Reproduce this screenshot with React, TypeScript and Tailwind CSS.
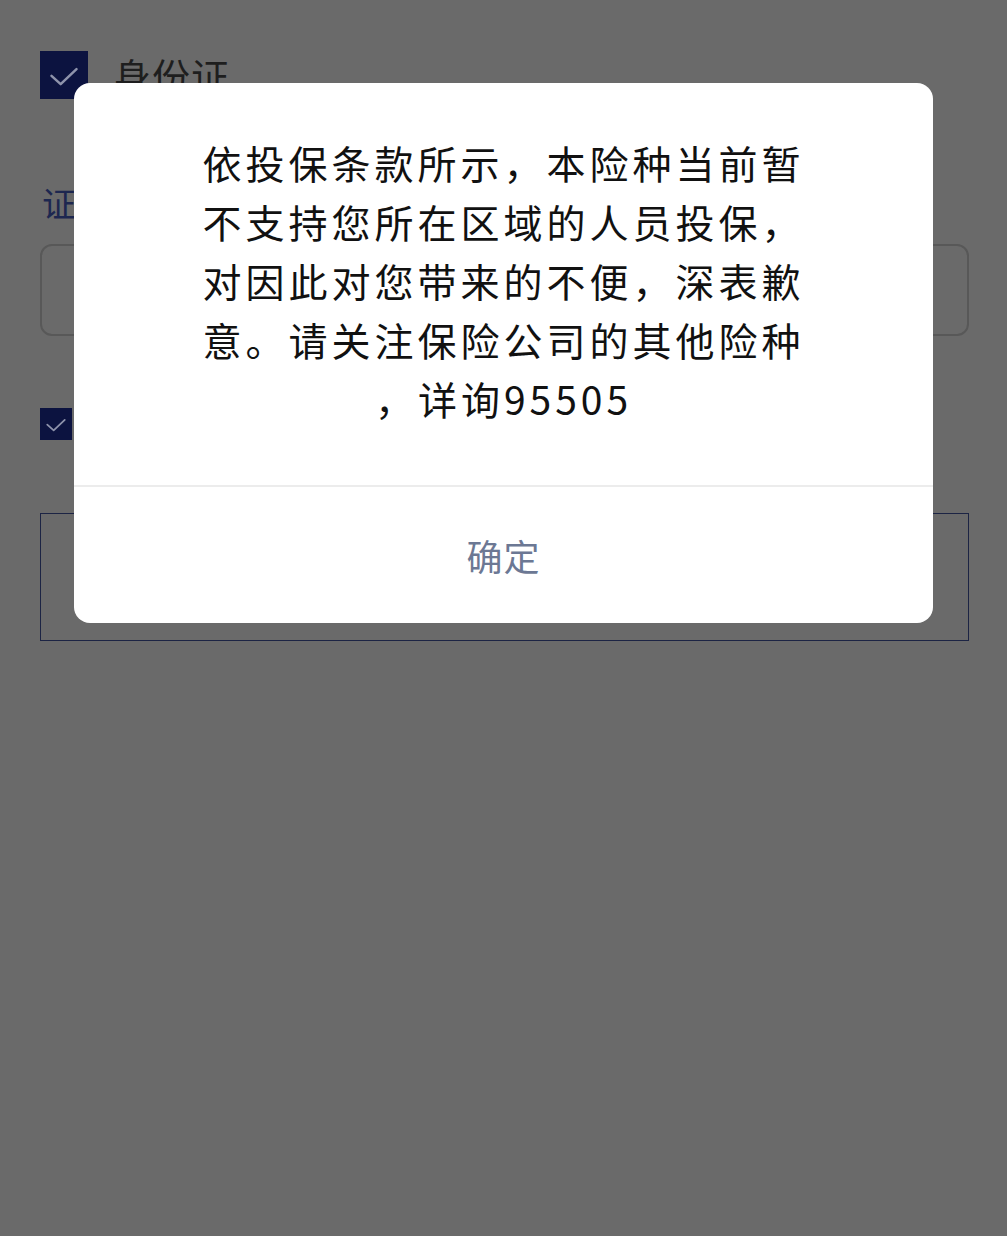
import React from "react";

const CJK = { fontFamily: '"Noto Sans CJK SC", "Noto Sans", sans-serif' };

function Check({ size, stroke }: { size: number; stroke: number }) {
  return (
    <svg width={size} height={size} viewBox="0 0 48 48" fill="none">
      <path
        d="M9 25 L20 35 L39 17"
        stroke="#8e93ab"
        strokeWidth={stroke}
        strokeLinecap="round"
        strokeLinejoin="round"
      />
    </svg>
  );
}

export default function App() {
  const lines = [
    "依投保条款所示，本险种当前暂",
    "不支持您所在区域的人员投保，",
    "对因此对您带来的不便，深表歉",
    "意。请关注保险公司的其他险种",
    "，详询95505",
  ];
  return (
    <div className="relative w-[1007px] h-[1236px] bg-[#6a6a6a] overflow-hidden" style={CJK}>
      {/* underlying page */}
      <div className="flex flex-col px-[40px] pt-[51px]">
        <div className="flex items-center gap-[25px] h-[48px]">
          <div className="w-[48px] h-[48px] bg-[#0c1340] flex items-center justify-center">
            <Check size={40} stroke={3} />
          </div>
          <span className="text-[38px] leading-[48px] text-[#1e1e1e] tracking-[1px]">身份证</span>
        </div>
        <div className="mt-[84px] text-[34px] leading-[40px] text-[#1d2750] pl-[2px]">证件号码</div>
        <div className="mt-[21px] h-[92px] w-[929px] rounded-[12px] border-2 border-[#585858]"></div>
        <div className="mt-[72px] flex items-center gap-[14px] h-[32px]">
          <div className="w-[32px] h-[32px] bg-[#0c1340] flex items-center justify-center">
            <Check size={28} stroke={3} />
          </div>
          <span className="text-[28px] text-[#1e1e1e]">本人已阅读并同意</span>
        </div>
        <div className="mt-[73px] h-[128px] w-[929px] border-[1.5px] border-[#1c2444]"></div>
      </div>

      {/* dialog */}
      <div className="absolute left-[74px] top-[83px] w-[859px] bg-white rounded-[16px] overflow-hidden flex flex-col">
        <div className="pt-[50px] pb-[57px] flex flex-col items-center text-[39px] leading-[59px] tracking-[4px] text-[#111111]">
          {lines.map((l, i) => (
            <div key={i} className="whitespace-nowrap">{l}</div>
          ))}
        </div>
        <div className="h-[2px] bg-[#ececec]"></div>
        <div className="h-[136px] flex items-center justify-center text-[36px] tracking-[1px] text-[#6c7894]">
          确定
        </div>
      </div>
    </div>
  );
}
